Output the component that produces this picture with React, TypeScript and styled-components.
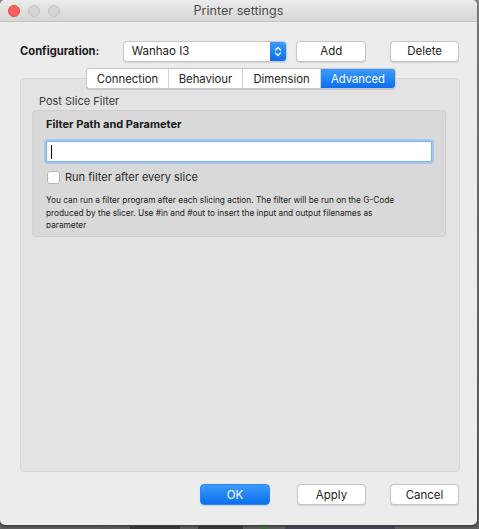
import React from "react";
import styled, { createGlobalStyle } from "styled-components";

const Global = createGlobalStyle`
  html, body { margin: 0; padding: 0; }
  body {
    width: 479px;
    height: 529px;
    overflow: hidden;
    background: #6f6f6f;
    font-family: "Inter", "Liberation Sans", sans-serif;
    -webkit-font-smoothing: antialiased;
  }
`;

const Page = styled.div`
  width: 479px;
  height: 529px;
  display: flex;
  flex-direction: column;
  background: linear-gradient(#8a8a8a, #5f5f5f);
`;

const Window = styled.div`
  width: 477px;
  height: 525px;
  flex: none;
  background: #ececec;
  border-radius: 5px;
  box-shadow: 0 1px 3px rgba(0, 0, 0, 0.55);
  display: flex;
  flex-direction: column;
  overflow: hidden;
`;

const TitleBar = styled.div`
  height: 21px;
  flex: none;
  display: flex;
  align-items: center;
  position: relative;
  background: linear-gradient(#ebebeb, #d6d6d6);
  border-bottom: 1px solid #c4c4c4;
`;

const Lights = styled.div`
  display: flex;
  gap: 8px;
  padding-left: 8px;
`;

const Light = styled.span<{ $c: string; $b: string }>`
  width: 12px;
  height: 12px;
  border-radius: 50%;
  background: ${(p) => p.$c};
  box-sizing: border-box;
  border: 1px solid ${(p) => p.$b};
`;

const Title = styled.div`
  position: absolute;
  left: 0;
  right: 0;
  text-align: center;
  font-size: 12.6px;
  color: #4d4d4d;
  pointer-events: none;
`;

const Body = styled.div`
  flex: 1;
  display: flex;
  flex-direction: column;
  padding: 18px 18px 0 20px;
`;

const ConfigRow = styled.div`
  display: flex;
  align-items: center;
  height: 22px;
`;

const ConfigLabel = styled.div`
  font-size: 11.2px;
  font-weight: 700;
  color: #1a1a1a;
  width: 103px;
`;

const Combo = styled.div`
  width: 165px;
  height: 21px;
  box-sizing: border-box;
  background: #fff;
  border: 1px solid #c8c8c8;
  border-radius: 4px;
  display: flex;
  align-items: center;
  overflow: hidden;
  box-shadow: 0 0.5px 1px rgba(0, 0, 0, 0.1);
`;

const ComboText = styled.div`
  flex: 1;
  padding-left: 8px;
  font-size: 11.5px;
  color: #222;
`;

const Stepper = styled.div`
  width: 16px;
  height: 100%;
  background: linear-gradient(#3d9bfc, #0a6fee);
  display: flex;
  align-items: center;
  justify-content: center;
`;

const Spacer = styled.div<{ $w: number }>`
  width: ${(p) => p.$w}px;
  flex: none;
`;

const Button = styled.div<{ $primary?: boolean; $w: number }>`
  width: ${(p) => p.$w}px;
  height: 21px;
  box-sizing: border-box;
  border-radius: 4px;
  display: flex;
  align-items: center;
  justify-content: center;
  font-size: 11.5px;
  color: ${(p) => (p.$primary ? "#fff" : "#222")};
  background: ${(p) =>
    p.$primary ? "linear-gradient(#3d9bfc, #0b6ff0)" : "#fff"};
  border: 1px solid ${(p) => (p.$primary ? "#2b85f5" : "#c6c6c6")};
  box-shadow: 0 0.5px 1px rgba(0, 0, 0, 0.12);
`;

const Tabs = styled.div`
  display: flex;
  align-self: flex-start;
  margin: 6px 0 0 66px;
  height: 21px;
  box-sizing: border-box;
  background: #fff;
  border: 1px solid #c9c9c9;
  border-radius: 4px;
  overflow: hidden;
  position: relative;
  z-index: 1;
  box-shadow: 0 0.5px 1px rgba(0, 0, 0, 0.12);
`;

const Tab = styled.div<{ $active?: boolean; $w: number }>`
  width: ${(p) => p.$w}px;
  display: flex;
  align-items: center;
  justify-content: center;
  font-size: 11.3px;
  color: ${(p) => (p.$active ? "#fff" : "#222")};
  background: ${(p) =>
    p.$active ? "linear-gradient(#3d9bfc, #0b6ff0)" : "#fff"};
  & + & {
    border-left: 1px solid #d4d4d4;
  }
`;

const Panel = styled.div`
  margin-top: -11px;
  width: 440px;
  height: 394px;
  box-sizing: border-box;
  background: #e3e3e3;
  border: 1px solid #d8d8d8;
  border-radius: 4px;
  padding: 15px 13px 0 11px;
  display: flex;
  flex-direction: column;
`;

const SectionLabel = styled.div`
  font-size: 11px;
  color: #3a3a3a;
  padding-left: 7px;
  height: 15px;
  line-height: 15px;
`;

const Group = styled.div`
  margin-top: 1px;
  height: 127px;
  box-sizing: border-box;
  background: #d9d9d9;
  border: 1px solid #d0d0d0;
  border-radius: 4px;
  padding: 5px 13px 0 13px;
  display: flex;
  flex-direction: column;
  overflow: hidden;
`;

const GroupTitle = styled.div`
  font-size: 11px;
  font-weight: 700;
  color: #1a1a1a;
  height: 16px;
  line-height: 16px;
`;

const Input = styled.div`
  margin-top: 9px;
  height: 21px;
  box-sizing: border-box;
  background: #fff;
  border: 1px solid #7fb2e6;
  box-shadow: 0 0 0 2px #a7c8ee;
  border-radius: 2px;
  display: flex;
  align-items: center;
  padding-left: 4px;
`;

const Caret = styled.span`
  width: 1px;
  height: 14px;
  background: #000;
`;

const CheckRow = styled.label`
  margin-top: 8px;
  display: flex;
  align-items: center;
  gap: 5px;
  font-size: 11px;
  color: #2a2a2a;
  padding-left: 1px;
`;

const Check = styled.span`
  width: 13px;
  height: 13px;
  box-sizing: border-box;
  background: #fff;
  border: 1px solid #b8b8b8;
  border-radius: 3px;
`;

const Help = styled.p`
  margin: 10px 0 0 0;
  font-size: 8.3px;
  line-height: 12.5px;
  color: #222;
  width: 364px;
  max-height: 34px;
  overflow: hidden;
`;

const Footer = styled.div`
  display: flex;
  justify-content: flex-end;
  align-items: center;
  margin-top: 12px;
  gap: 27px;
`;

const FooterRight = styled.div`
  display: flex;
  gap: 24px;
`;

const Shelf = styled.div`
  flex: 1;
  display: flex;
  align-items: flex-start;
  padding: 1px 0 0 100px;
  gap: 18px;
  overflow: hidden;
`;

const Blot = styled.span<{ $w: number; $c?: string }>`
  width: ${(p) => p.$w}px;
  height: 3px;
  background: ${(p) => p.$c ?? "#2a2a2a"};
  opacity: 0.7;
`;

export default function App() {
  return (
    <Page>
      <Global />
      <Window>
        <TitleBar>
          <Lights>
            <Light $c="#fc605c" $b="#de4a45" />
            <Light $c="#d4d4d4" $b="#c2c2c2" />
            <Light $c="#d4d4d4" $b="#c2c2c2" />
          </Lights>
          <Title>Printer settings</Title>
        </TitleBar>
        <Body>
          <ConfigRow>
            <ConfigLabel>Configuration:</ConfigLabel>
            <Combo>
              <ComboText>Wanhao I3</ComboText>
              <Stepper>
                <svg width="8" height="13" viewBox="0 0 8 13">
                  <path
                    d="M1.5 5 L4 2.5 L6.5 5 M1.5 8 L4 10.5 L6.5 8"
                    fill="none"
                    stroke="#fff"
                    strokeWidth="1.3"
                    strokeLinecap="round"
                    strokeLinejoin="round"
                  />
                </svg>
              </Stepper>
            </Combo>
            <Spacer $w={9} />
            <Button $w={70}>Add</Button>
            <Spacer $w={24} />
            <Button $w={69}>Delete</Button>
          </ConfigRow>
          <Tabs>
            <Tab $w={81}>Connection</Tab>
            <Tab $w={73}>Behaviour</Tab>
            <Tab $w={77}>Dimension</Tab>
            <Tab $w={74} $active>
              Advanced
            </Tab>
          </Tabs>
          <Panel>
            <SectionLabel>Post Slice Filter</SectionLabel>
            <Group>
              <GroupTitle>Filter Path and Parameter</GroupTitle>
              <Input>
                <Caret />
              </Input>
              <CheckRow>
                <Check />
                Run filter after every slice
              </CheckRow>
              <Help>
                You can run a filter program after each slicing action. The
                filter will be run on the G-Code produced by the slicer. Use
                #in and #out to insert the input and output filenames as
                parameter
              </Help>
            </Group>
          </Panel>
          <Footer>
            <Button $w={70} $primary>
              OK
            </Button>
            <FooterRight>
              <Button $w={69}>Apply</Button>
              <Button $w={69}>Cancel</Button>
            </FooterRight>
          </Footer>
        </Body>
      </Window>
      <Shelf>
        <Blot $w={12} $c="#555" />
        <Blot $w={50} />
        <Blot $w={45} />
        <Blot $w={6} $c="#2f7a2f" />
        <Blot $w={110} $c="#3a3a55" />
      </Shelf>
    </Page>
  );
}
